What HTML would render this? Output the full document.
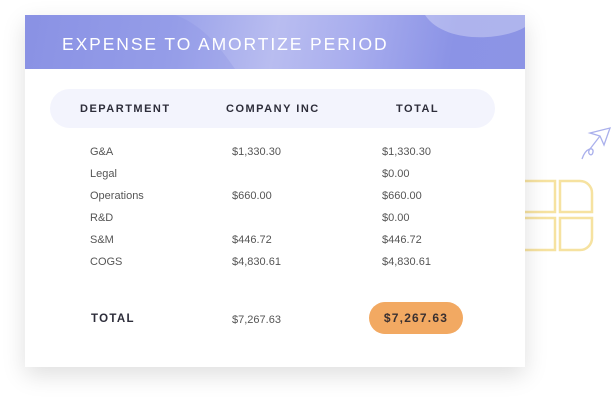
<!DOCTYPE html>
<html><head><style>
body{margin:0;width:611px;height:402px;background:#fff;position:relative;overflow:hidden;font-family:"Liberation Sans",sans-serif}
.card{position:absolute;left:25px;top:15px;width:500px;height:352px;background:#fff;box-shadow:0 8px 22px rgba(0,0,0,0.13);overflow:hidden}
.hdr{position:absolute;left:0;top:0;width:500px;height:54px;background:linear-gradient(100deg,#8c94e5 0%,#9ba3ea 30%,#b9bdf0 50%,#a9aeee 65%,#8b93e6 85%,#8c94e5 100%);overflow:hidden}
.hdr h1{position:absolute;left:37px;top:19px;margin:0;font-size:17.5px;font-weight:normal;color:#fff;letter-spacing:1.9px}
.pill{position:absolute;left:25px;top:74px;width:445px;height:39px;background:#f3f4fd;border-radius:20px}
.th{position:absolute;top:88px;font-size:11px;font-weight:bold;letter-spacing:1.5px;color:#2d2d3a}
.td{position:absolute;font-size:11px;color:#555}
.tot{position:absolute;left:344px;top:287px;width:94px;height:32px;background:#f2a962;border-radius:16px;font-size:12px;font-weight:bold;letter-spacing:1.2px;color:#3a3030;text-align:center;line-height:32px}
</style></head><body>
<svg style="position:absolute;left:515px;top:178px" width="80" height="76" viewBox="0 0 80 76">
<g fill="none" stroke="#f6e2a0" stroke-width="2.5">
<path d="M3 3 H40 V34 H3Z"/>
<path d="M45 3 H65 A12 12 0 0 1 77 15 V34 H45Z"/>
<path d="M3 40 H40 V72 H3Z"/>
<path d="M45 40 H77 V60 A12 12 0 0 1 65 72 H45Z"/>
</g></svg>
<svg style="position:absolute;left:578px;top:125px" width="34" height="40" viewBox="0 0 34 40">
<g fill="none" stroke="#aab0ec" stroke-width="1.3">
<path d="M12 8 L32 3 L26 20 L22 11Z"/>
<path d="M22 11 L12 24 C8 28 14 33 15 27 C16 22 8 22 4 34"/>
</g></svg>
<div class="card">
<div class="hdr">
<svg style="position:absolute;left:0;top:0" width="500" height="54"><path d="M400 0 C420 30 480 25 500 12 V0Z" fill="rgba(255,255,255,0.3)"/><path d="M0 0 H150 C180 10 200 40 210 54 H0Z" fill="rgba(130,138,228,0.25)"/></svg>
<h1>EXPENSE TO AMORTIZE PERIOD</h1></div>
<div class="pill"></div>
<div class="th" style="left:55px">DEPARTMENT</div>
<div class="th" style="left:201px">COMPANY INC</div>
<div class="th" style="left:371px">TOTAL</div>
<div class="td" style="left:65px;top:131px">G&amp;A</div><div class="td" style="left:207px;top:131px">$1,330.30</div><div class="td" style="left:357px;top:131px">$1,330.30</div>
<div class="td" style="left:65px;top:153px">Legal</div><div class="td" style="left:357px;top:153px">$0.00</div>
<div class="td" style="left:65px;top:175px">Operations</div><div class="td" style="left:207px;top:175px">$660.00</div><div class="td" style="left:357px;top:175px">$660.00</div>
<div class="td" style="left:65px;top:197px">R&amp;D</div><div class="td" style="left:357px;top:197px">$0.00</div>
<div class="td" style="left:65px;top:219px">S&amp;M</div><div class="td" style="left:207px;top:219px">$446.72</div><div class="td" style="left:357px;top:219px">$446.72</div>
<div class="td" style="left:65px;top:241px">COGS</div><div class="td" style="left:207px;top:241px">$4,830.61</div><div class="td" style="left:357px;top:241px">$4,830.61</div>
<div class="th" style="left:66px;top:298px;font-size:11.5px;letter-spacing:1.3px">TOTAL</div>
<div class="td" style="left:207px;top:299px">$7,267.63</div>
<div class="tot">$7,267.63</div>
</div>
</body></html>
